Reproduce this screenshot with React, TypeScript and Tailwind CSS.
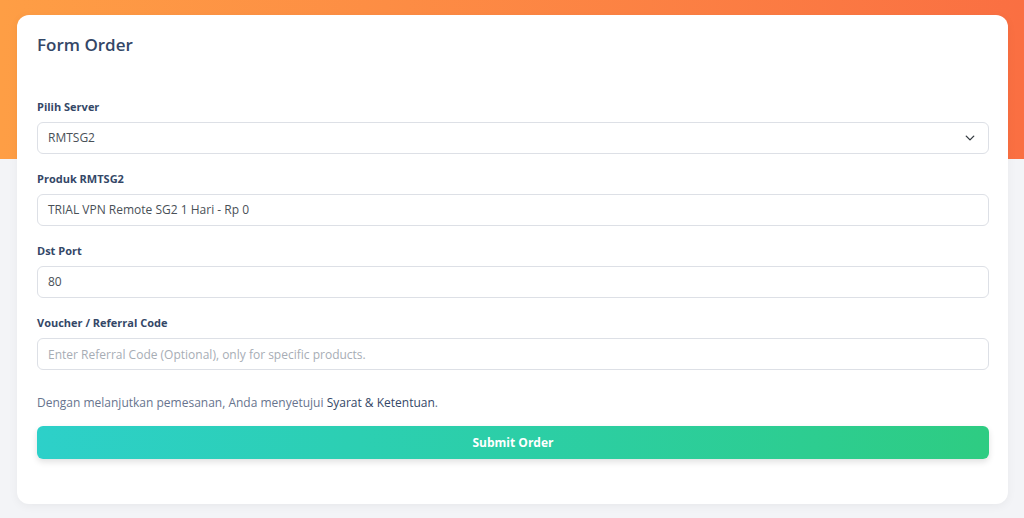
import React from "react";

export default function App() {
  return (
    <div
      className="relative min-h-[518px] w-full bg-[#f3f4f7]"
      style={{ fontFamily: '"Open Sans", "Liberation Sans", sans-serif' }}
    >
      <div className="absolute left-0 right-0 top-0 h-[159px] bg-gradient-to-r from-[#fe9e45] to-[#fa6f42]" />
      <div className="relative pl-[17px] pr-[16px] pt-[15px]">
        <div className="rounded-[12px] bg-white pb-[45px] pl-5 pr-[19px] pt-[18px] shadow-[0_2px_10px_rgba(0,0,0,0.05)]">
          <h1 className="text-[17px] font-semibold leading-[24px] text-[#344767]">Form Order</h1>
          <div className="mt-[42px] flex flex-col gap-[17px]">
            <div>
              <label className="mb-[7px] block text-[11px] font-bold leading-[16px] text-[#344767]">Pilih Server</label>
              <div className="flex h-8 items-center justify-between rounded-[6px] border border-[#dde0e6] pl-[10px] pr-[13px] text-[12px] text-[#495057]">
                <span>RMTSG2</span>
                <svg width="10" height="10" viewBox="0 0 16 16" fill="none" stroke="#343a40" strokeWidth="2.2" strokeLinecap="round" strokeLinejoin="round">
                  <path d="M2 5l6 6 6-6" />
                </svg>
              </div>
            </div>
            <div>
              <label className="mb-[7px] block text-[11px] font-bold leading-[16px] text-[#344767]">Produk RMTSG2</label>
              <div className="flex h-8 items-center rounded-[6px] border border-[#dde0e6] pl-[10px] text-[12px] text-[#495057]">
                TRIAL VPN Remote SG2 1 Hari - Rp 0
              </div>
            </div>
            <div>
              <label className="mb-[7px] block text-[11px] font-bold leading-[16px] text-[#344767]">Dst Port</label>
              <div className="flex h-8 items-center rounded-[6px] border border-[#dde0e6] pl-[10px] text-[12px] text-[#495057]">
                80
              </div>
            </div>
            <div>
              <label className="mb-[7px] block text-[11px] font-bold leading-[16px] text-[#344767]">Voucher / Referral Code</label>
              <input
                className="block h-8 w-full rounded-[6px] border border-[#dde0e6] pl-[10px] text-[12px] text-[#495057] outline-none placeholder:text-[#a7adb5]"
                placeholder="Enter Referral Code (Optional), only for specific products."
              />
            </div>
          </div>
          <p className="mt-[24px] text-[12px] leading-[18px] text-[#67748e]">
            Dengan melanjutkan pemesanan, Anda menyetujui <span className="text-[#344767]">Syarat &amp; Ketentuan</span>.
          </p>
          <button className="mt-[14px] flex h-[33px] w-full items-center justify-center rounded-[6px] bg-gradient-to-r from-[#2dd0c9] to-[#2ecc82] text-[12px] font-bold text-white shadow-[0_3px_6px_rgba(0,0,0,0.12)]">
            Submit Order
          </button>
        </div>
      </div>
    </div>
  );
}
